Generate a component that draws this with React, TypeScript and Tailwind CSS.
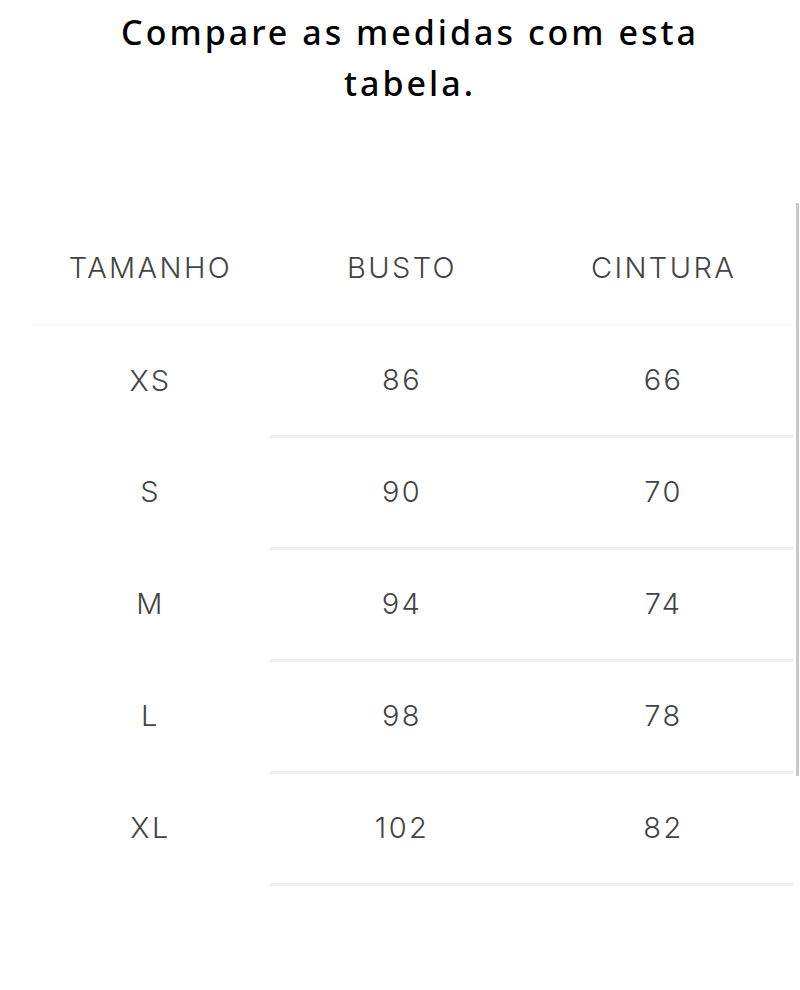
import React from "react";

const rows = [
  { size: "XS", busto: "86", cintura: "66" },
  { size: "S", busto: "90", cintura: "70" },
  { size: "M", busto: "94", cintura: "74" },
  { size: "L", busto: "98", cintura: "78" },
  { size: "XL", busto: "102", cintura: "82" },
];

export default function App() {
  return (
    <div className="relative w-[800px] h-[990px] bg-white overflow-hidden">
      <h2 className="pt-[7px] pl-5 text-center font-['Noto_Sans',sans-serif] font-medium text-[34px] leading-[51px] tracking-[3px] text-black">
        Compare as medidas com esta
        <br />
        tabela.
      </h2>

      <div className="mt-[102px] pl-[31px] pr-[7px] font-['Inter',sans-serif] text-[#444] font-light text-[29px] tracking-[2.4px]">
        <table className="w-full border-collapse">
          <thead>
            <tr className="h-[113px] border-b border-[#f7f7f7]">
              <th className="w-[239px] font-light">TAMANHO</th>
              <th className="w-[264px] font-light">BUSTO</th>
              <th className="font-light">CINTURA</th>
            </tr>
          </thead>
          <tbody>
            {rows.map((r) => (
              <tr key={r.size} className="h-[112px]">
                <td className="text-center">{r.size}</td>
                <td className="text-center border-b-[3px] border-[#f0f0f0]">{r.busto}</td>
                <td className="text-center border-b-[3px] border-[#f0f0f0]">{r.cintura}</td>
              </tr>
            ))}
          </tbody>
        </table>
      </div>

      {/* scroll indicator */}
      <div className="absolute left-[796px] top-[203px] w-[3px] h-[573px] bg-[#c8c8c8]" />
    </div>
  );
}
